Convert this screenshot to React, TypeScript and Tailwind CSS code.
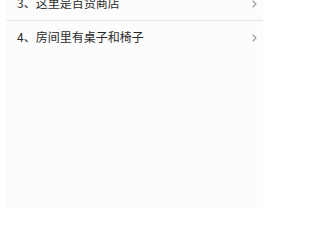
import React from "react";

function Chevron() {
  return (
    <svg width="5" height="8" viewBox="0 0 5 8" fill="none" className="shrink-0">
      <path d="M1 1l3 3-3 3" stroke="#9a9a9a" strokeWidth="1.1" strokeLinecap="round" strokeLinejoin="round" />
    </svg>
  );
}

const items = ["3、这里是百货商店", "4、房间里有桌子和椅子"];

export default function App() {
  return (
    <div className="w-[270px] h-[209px] overflow-hidden bg-white" style={{ fontFamily: '"Noto Sans CJK SC", "Noto Sans", sans-serif' }}>
      <div className="-mt-[12px] mx-[6px] w-[257px] h-[221px] bg-[#fcfcfc]">
        {items.map((t, i) => (
          <div
            key={t}
            className={`flex items-center justify-between h-[33px] pl-[11px] pr-[6px] ${i === 0 ? "border-b border-[#e6e6e6]" : ""}`}
          >
            <span className="text-[12px] leading-none text-[#2a2a2a] pb-[2px]">{t}</span>
            <Chevron />
          </div>
        ))}
      </div>
    </div>
  );
}
